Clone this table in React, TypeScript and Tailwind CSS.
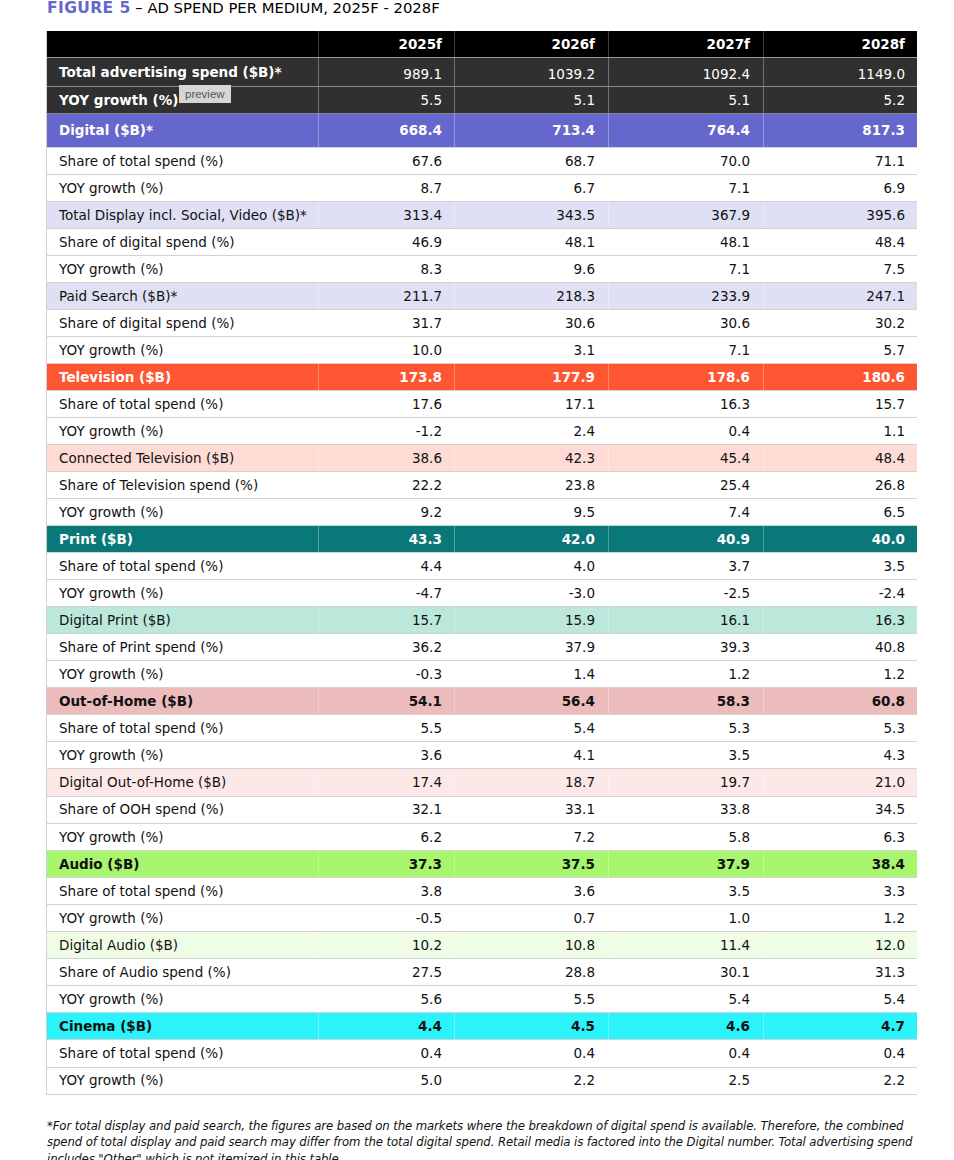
import React from 'react';

type Kind = 'plain' | 'main' | 'sub' | 'dark';

interface Row {
  label: string;
  values: string[];
  kind: Kind;
  bg?: string;
  light?: boolean; // white text on main rows
}

const rows: Row[] = [
  { label: 'Total advertising spend ($B)*', values: ['989.1', '1039.2', '1092.4', '1149.0'], kind: 'dark' },
  { label: 'YOY growth (%)', values: ['5.5', '5.1', '5.1', '5.2'], kind: 'dark' },
  { label: 'Digital ($B)*', values: ['668.4', '713.4', '764.4', '817.3'], kind: 'main', bg: 'bg-[#6667cc]', light: true },
  { label: 'Share of total spend (%)', values: ['67.6', '68.7', '70.0', '71.1'], kind: 'plain' },
  { label: 'YOY growth (%)', values: ['8.7', '6.7', '7.1', '6.9'], kind: 'plain' },
  { label: 'Total Display incl. Social, Video ($B)*', values: ['313.4', '343.5', '367.9', '395.6'], kind: 'sub', bg: 'bg-[#e0e0f4]' },
  { label: 'Share of digital spend (%)', values: ['46.9', '48.1', '48.1', '48.4'], kind: 'plain' },
  { label: 'YOY growth (%)', values: ['8.3', '9.6', '7.1', '7.5'], kind: 'plain' },
  { label: 'Paid Search ($B)*', values: ['211.7', '218.3', '233.9', '247.1'], kind: 'sub', bg: 'bg-[#e0e0f4]' },
  { label: 'Share of digital spend (%)', values: ['31.7', '30.6', '30.6', '30.2'], kind: 'plain' },
  { label: 'YOY growth (%)', values: ['10.0', '3.1', '7.1', '5.7'], kind: 'plain' },
  { label: 'Television ($B)', values: ['173.8', '177.9', '178.6', '180.6'], kind: 'main', bg: 'bg-[#fe5632]', light: true },
  { label: 'Share of total spend (%)', values: ['17.6', '17.1', '16.3', '15.7'], kind: 'plain' },
  { label: 'YOY growth (%)', values: ['-1.2', '2.4', '0.4', '1.1'], kind: 'plain' },
  { label: 'Connected Television ($B)', values: ['38.6', '42.3', '45.4', '48.4'], kind: 'sub', bg: 'bg-[#fedcd5]' },
  { label: 'Share of Television spend (%)', values: ['22.2', '23.8', '25.4', '26.8'], kind: 'plain' },
  { label: 'YOY growth (%)', values: ['9.2', '9.5', '7.4', '6.5'], kind: 'plain' },
  { label: 'Print ($B)', values: ['43.3', '42.0', '40.9', '40.0'], kind: 'main', bg: 'bg-[#0a7878]', light: true },
  { label: 'Share of total spend (%)', values: ['4.4', '4.0', '3.7', '3.5'], kind: 'plain' },
  { label: 'YOY growth (%)', values: ['-4.7', '-3.0', '-2.5', '-2.4'], kind: 'plain' },
  { label: 'Digital Print ($B)', values: ['15.7', '15.9', '16.1', '16.3'], kind: 'sub', bg: 'bg-[#bce8dc]' },
  { label: 'Share of Print spend (%)', values: ['36.2', '37.9', '39.3', '40.8'], kind: 'plain' },
  { label: 'YOY growth (%)', values: ['-0.3', '1.4', '1.2', '1.2'], kind: 'plain' },
  { label: 'Out-of-Home ($B)', values: ['54.1', '56.4', '58.3', '60.8'], kind: 'main', bg: 'bg-[#ecbcbc]' },
  { label: 'Share of total spend (%)', values: ['5.5', '5.4', '5.3', '5.3'], kind: 'plain' },
  { label: 'YOY growth (%)', values: ['3.6', '4.1', '3.5', '4.3'], kind: 'plain' },
  { label: 'Digital Out-of-Home ($B)', values: ['17.4', '18.7', '19.7', '21.0'], kind: 'sub', bg: 'bg-[#fde8e8]' },
  { label: 'Share of OOH spend (%)', values: ['32.1', '33.1', '33.8', '34.5'], kind: 'plain' },
  { label: 'YOY growth (%)', values: ['6.2', '7.2', '5.8', '6.3'], kind: 'plain' },
  { label: 'Audio ($B)', values: ['37.3', '37.5', '37.9', '38.4'], kind: 'main', bg: 'bg-[#a8f56e]' },
  { label: 'Share of total spend (%)', values: ['3.8', '3.6', '3.5', '3.3'], kind: 'plain' },
  { label: 'YOY growth (%)', values: ['-0.5', '0.7', '1.0', '1.2'], kind: 'plain' },
  { label: 'Digital Audio ($B)', values: ['10.2', '10.8', '11.4', '12.0'], kind: 'sub', bg: 'bg-[#effde6]' },
  { label: 'Share of Audio spend (%)', values: ['27.5', '28.8', '30.1', '31.3'], kind: 'plain' },
  { label: 'YOY growth (%)', values: ['5.6', '5.5', '5.4', '5.4'], kind: 'plain' },
  { label: 'Cinema ($B)', values: ['4.4', '4.5', '4.6', '4.7'], kind: 'main', bg: 'bg-[#2af3fb]' },
  { label: 'Share of total spend (%)', values: ['0.4', '0.4', '0.4', '0.4'], kind: 'plain' },
  { label: 'YOY growth (%)', values: ['5.0', '2.2', '2.5', '2.2'], kind: 'plain' },
];

const cols = 'grid grid-cols-[271px_136px_154px_155px_155px]';

function TableRow({ row, index }: { row: Row; index: number }) {
  const isDark = row.kind === 'dark';
  const isMain = row.kind === 'main';
  const bg = isDark ? 'bg-[#303030]' : row.bg ?? 'bg-white';
  const text = isDark || row.light ? 'text-white' : 'text-[#111]';
  // rows further down the table sit a touch taller in the reference
  const height = isDark
    ? index === 0
      ? 'h-[29px]'
      : 'h-[27px]'
    : index === 2
      ? 'h-[34px]'
      : index > 20
        ? 'h-[27.1px]'
        : 'h-[27px]';
  const border = isDark ? 'border-b border-[#8a8a8a]' : 'border-b border-[#d2d2d2]';
  const labelWeight = isDark || isMain ? 'font-bold' : 'font-normal';
  const valueWeight = isMain ? 'font-bold' : 'font-normal';

  return (
    <div className={`${cols} ${bg} ${text} ${height} ${border}`}>
      <div className={`flex items-center pl-3 text-[13.5px] ${labelWeight}`}>{row.label}</div>
      {row.values.map((v, i) => (
        <div
          key={i}
          className={`flex items-center justify-end border-l border-white/30 text-[13.5px] ${valueWeight} ${
            i === 0 ? 'pr-3' : 'pr-[13px]'
          } ${isDark && index === 0 ? 'pt-1' : ''}`}
        >
          {v}
        </div>
      ))}
    </div>
  );
}

export default function App() {
  return (
    <div className="w-[954px] h-[1160px] overflow-hidden bg-white font-['DejaVu_Sans',Verdana,sans-serif] text-[#111]">
      <div className="pl-[47px] -mt-[2px] leading-5 whitespace-nowrap">
        <span className="text-[15.5px] font-bold tracking-[0.4px] text-[#6667cc]">FIGURE 5</span>
        <span className="text-[14.8px] text-black"> – AD SPEND PER MEDIUM, 2025F - 2028F</span>
      </div>

      <div className="relative ml-[46px] mt-[13px] w-[871px] border-l border-[#d0d0d0]">
        {/* header */}
        <div className={`${cols} h-[27px] bg-black text-white border-b border-[#9a9a9a]`}>
          <div />
          {['2025f', '2026f', '2027f', '2028f'].map((y, i) => (
            <div
              key={y}
              className={`flex items-center justify-end border-l border-white/25 text-[13.5px] font-bold ${
                i === 0 ? 'pr-3' : 'pr-[13px]'
              }`}
            >
              {y}
            </div>
          ))}
        </div>

        {rows.map((r, i) => (
          <TableRow key={i} row={r} index={i} />
        ))}

        {/* hover tooltip */}
        <div className="absolute left-[132px] top-[54px] bg-[#d6d6d6] px-[6px] py-[2px] text-[11.5px] text-[#555] font-['Liberation_Sans',Arial,sans-serif] leading-[14px]">
          preview
        </div>
      </div>

      <p className="ml-[47px] mt-[23px] whitespace-nowrap text-[13px] italic leading-[16.5px] tracking-[-0.1px] text-[#111] font-['DejaVu_Sans_Condensed','DejaVu_Sans',sans-serif]">
        *For total display and paid search, the figures are based on the markets where the breakdown of digital spend is
        available. Therefore, the combined
        <br />
        spend of total display and paid search may differ from the total digital spend. Retail media is factored into the
        Digital number. Total advertising spend
        <br />
        includes "Other" which is not itemized in this table.
      </p>
    </div>
  );
}
